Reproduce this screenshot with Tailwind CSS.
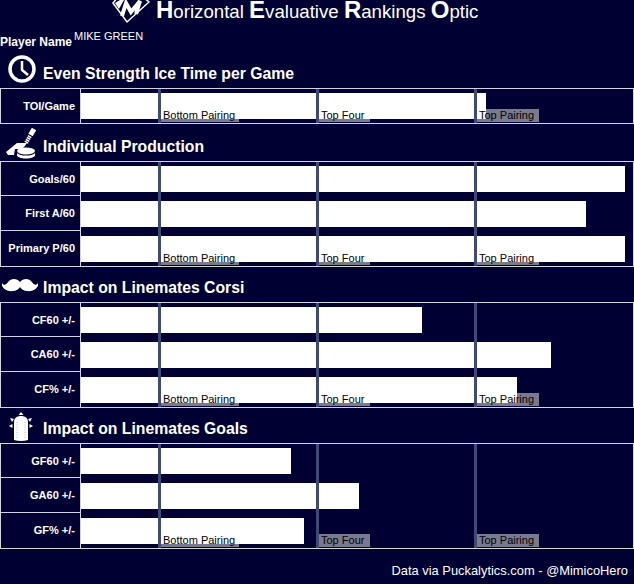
<!DOCTYPE html>
<html>
<head>
<meta charset="utf-8">
<title>HERO</title>
<script src="https://cdn.jsdelivr.net/npm/@tailwindcss/browser@4"></script>
</head>
<body class="bg-[#000033] text-white font-['Liberation_Sans',Arial,sans-serif] w-[634px] h-[584px] overflow-hidden">

  <!-- header -->
  <div class="flex items-start h-[24px] pl-[112px]">
    <svg class="w-[38px] h-[24px] mr-[6px] shrink-0" viewBox="0 0 38 24">
      <path d="M1 3 L6 -3 L31 -3 L37 2 L15 22 Z" fill="#000033" stroke="#fff" stroke-width="1.5"/>
      <path d="M3 3 L8 0 L12 0 L7 9 Z" fill="#fff"/>
      <path d="M10 16 L14 3 L19 12 L28 1 L24 14" fill="none" stroke="#fff" stroke-width="4"/>
    </svg>
    <p class="text-[18.67px] leading-[20px] whitespace-nowrap"><b class="text-[24px] leading-[20px]">H</b>orizontal <b class="text-[24px] leading-[20px]">E</b>valuative <b class="text-[24px] leading-[20px]">R</b>ankings <b class="text-[24px] leading-[20px]">O</b>ptic</p>
  </div>

  <div class="flex h-[24px] items-start">
    <span class="font-bold text-[12px] leading-[14px] mt-[11px]">Player Name</span>
    <span class="text-[11px] leading-[14px] mt-[5px] ml-[2px]">MIKE GREEN</span>
  </div>

  <div id="board"></div>

  <p class="text-right text-[12.9px] leading-[16px] pr-[6px] mt-[14px]">Data via Puckalytics.com - @MimicoHero</p>

  <!-- section icons -->
  <template id="icon-clock">
    <svg class="absolute left-[7px] top-[7px]" width="30" height="28" viewBox="0 0 30 28">
      <circle cx="15" cy="14" r="12" fill="none" stroke="#fff" stroke-width="3.5"/>
      <path d="M15 6 V15 L21 20" fill="none" stroke="#fff" stroke-width="2.5"/>
    </svg>
  </template>
  <template id="icon-stick">
    <svg class="absolute left-0 top-[1px]" width="45" height="36" viewBox="0 0 45 36">
      <path d="M34 4 L30.500 10" stroke="#fff" stroke-width="5"/>
      <path d="M30 11 L26 18" stroke="#fff" stroke-width="4" stroke-dasharray="1.500 .6"/>
      <path d="M6 27 L17 18 L27 18 L24 22 L21 24 L15 24 L14 30 L8 30 Z" fill="#fff"/>
      <ellipse cx="26" cy="26" rx="9" ry="3.400" fill="#fff"/>
      <path d="M17 28 V30 C17 32 21 33.500 26 33.500 C31 33.500 35 32 35 30 V28 C33 30 30 30.600 26 30.600 C22 30.600 19 30 17 28 Z" fill="#fff"/>
    </svg>
  </template>
  <template id="icon-stache">
    <svg class="absolute left-[1px] top-[11px]" width="38" height="14" viewBox="0 0 38 14">
      <path d="M19 4 C16 0 10 0 7 4 C5 7 3 8 1 5 C0 10 6 14 12 13 C15 13 18 11 19 9 C20 11 23 13 26 13 C32 14 38 10 37 5 C35 8 33 7 31 4 C28 0 22 0 19 4 Z" fill="#fff"/>
    </svg>
  </template>
  <template id="icon-spray">
    <svg class="absolute left-[8px] top-[4px]" width="26" height="30" viewBox="0 0 26 30">
      <path d="M6 28 V10 C6 6 9 4 13 4 C17 4 20 6 20 10 V28 Q13 30 6 28 Z" fill="#fff"/>
      <path d="M9 10 V27 M17 10 V27" stroke="#b8b8c4" stroke-dasharray="1 1.500"/>
      <path d="M13 0 L15.500 3 H10.500 Z M2 6 L6 7 L4 10 Z M24 6 L20 7 L22 10 Z M1 14 L4.500 12 L4.500 16 Z M25 14 L21.500 12 L21.500 16 Z" fill="#fff"/>
    </svg>
  </template>

  <script>
    var sections = [
      { icon: "icon-clock", title: "Even Strength Ice Time per Game", head: "h-[40px] pb-[4px]", rows: [["TOI/Game", 405]] },
      { icon: "icon-stick", title: "Individual Production", head: "h-[37px] pb-[4px]", rows: [["Goals/60", 544], ["First A/60", 505], ["Primary P/60", 544]] },
      { icon: "icon-stache", title: "Impact on Linemates Corsi", head: "h-[35px] pb-[4px]", rows: [["CF60 +/-", 341], ["CA60 +/-", 470], ["CF% +/-", 436]] },
      { icon: "icon-spray", title: "Impact on Linemates Goals", head: "h-[35px] pb-[4px]", rows: [["GF60 +/-", 210], ["GA60 +/-", 278], ["GF% +/-", 223]] }
    ];
    var tiers = [
      { name: "Bottom Pairing", bg: "absolute z-0 bottom-[1px] h-[13px] left-[80px] w-[78px] bg-[#7a7a8e]", txt: "absolute z-30 bottom-[1px] left-[82px] text-black text-[11px] leading-[13px] whitespace-nowrap" },
      { name: "Top Four", bg: "absolute z-0 bottom-[1px] h-[13px] left-[238px] w-[51px] bg-[#7a7a8e]", txt: "absolute z-30 bottom-[1px] left-[240px] text-black text-[11px] leading-[13px] whitespace-nowrap" },
      { name: "Top Pairing", bg: "absolute z-0 bottom-[1px] h-[13px] left-[396px] w-[62px] bg-[#7a7a8e]", txt: "absolute z-30 bottom-[1px] left-[398px] text-black text-[11px] leading-[13px] whitespace-nowrap" }
    ];
    var seps = ["left-[77px]", "left-[235px]", "left-[393px]"];
    var board = document.getElementById("board");

    sections.forEach(function (s) {
      var html = '<div class="relative flex items-end pl-[43px] font-[\'Noto_Sans\',sans-serif] font-bold text-[15.75px] leading-[20px] ' + s.head + '">' +
        document.getElementById(s.icon).innerHTML + '<span>' + s.title + '</span></div>';

      html += '<div class="flex border border-[#d4d4de]"><div class="w-[80px] shrink-0 border-r border-[#d4d4de] divide-y divide-[#d4d4de]">';
      s.rows.forEach(function (r) {
        html += '<div class="h-[35px] first:h-[34px] text-right pr-[5px] font-bold text-[11px] leading-[34px]">' + r[0] + '</div>';
      });
      html += '</div><div class="relative flex-1 flex flex-col gap-[9px] pt-[4px] pb-[4px]">';
      s.rows.forEach(function (r) {
        html += '<div class="relative z-10 h-[26px] bg-white" style="width:' + r[1] + 'px"></div>';
      });
      seps.forEach(function (left) {
        html += '<div class="absolute z-20 top-0 bottom-0 w-[3px] bg-[#3f4a75] ' + left + '"></div>';
      });
      tiers.forEach(function (t) {
        html += '<div class="' + t.bg + '"></div><div class="' + t.txt + '">' + t.name + '</div>';
      });
      html += '</div></div>';
      board.insertAdjacentHTML("beforeend", html);
    });
  </script>
</body>
</html>
